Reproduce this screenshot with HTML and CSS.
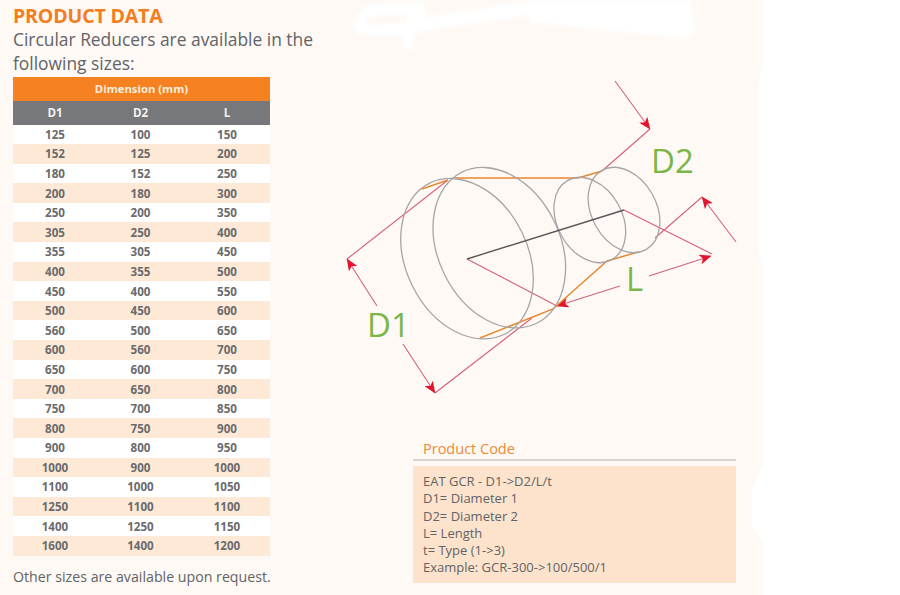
FILE: index.html
```html
<!DOCTYPE html>
<html lang="en">
<head>
<meta charset="utf-8">
<title>Circular Reducers - Product Data</title>
<link rel="stylesheet" href="styles.css">
</head>
<body>
<main class="page">
  <section class="data">
    <h1 class="title">PRODUCT DATA</h1>
    <p class="intro">Circular Reducers are available in the following sizes:</p>
    <div class="sizes">
      <div class="band">Dimension (mm)</div>
      <div class="row head"><span>D1</span><span>D2</span><span>L</span></div>
      <div class="row"><span>125</span><span>100</span><span>150</span></div>
      <div class="row"><span>152</span><span>125</span><span>200</span></div>
      <div class="row"><span>180</span><span>152</span><span>250</span></div>
      <div class="row"><span>200</span><span>180</span><span>300</span></div>
      <div class="row"><span>250</span><span>200</span><span>350</span></div>
      <div class="row"><span>305</span><span>250</span><span>400</span></div>
      <div class="row"><span>355</span><span>305</span><span>450</span></div>
      <div class="row"><span>400</span><span>355</span><span>500</span></div>
      <div class="row"><span>450</span><span>400</span><span>550</span></div>
      <div class="row"><span>500</span><span>450</span><span>600</span></div>
      <div class="row"><span>560</span><span>500</span><span>650</span></div>
      <div class="row"><span>600</span><span>560</span><span>700</span></div>
      <div class="row"><span>650</span><span>600</span><span>750</span></div>
      <div class="row"><span>700</span><span>650</span><span>800</span></div>
      <div class="row"><span>750</span><span>700</span><span>850</span></div>
      <div class="row"><span>800</span><span>750</span><span>900</span></div>
      <div class="row"><span>900</span><span>800</span><span>950</span></div>
      <div class="row"><span>1000</span><span>900</span><span>1000</span></div>
      <div class="row"><span>1100</span><span>1000</span><span>1050</span></div>
      <div class="row"><span>1250</span><span>1100</span><span>1100</span></div>
      <div class="row"><span>1400</span><span>1250</span><span>1150</span></div>
      <div class="row"><span>1600</span><span>1400</span><span>1200</span></div>
    </div>
    <p class="note">Other sizes are available upon request.</p>
  </section>
  <section class="side">
    <svg class="diagram" viewBox="340 0 423 430" width="423" height="430" aria-label="Reducer diagram">
      <defs>
        <marker id="head" viewBox="0 0 12 10" refX="11.5" refY="5" markerWidth="12" markerHeight="10" markerUnits="userSpaceOnUse" orient="auto">
          <path class="tip" d="M0 0 L12 5 L0 10 L3 5 Z"/>
        </marker>
        <filter id="soft" x="-5%" y="-20%" width="110%" height="140%"><feGaussianBlur stdDeviation="1.5"/></filter>
      </defs>
      <path class="smear" filter="url(#soft)" fill-rule="evenodd" d="M353 27 L358 12 L370 5 L423 3 L427 17 L527 2 L543 0 L690 0 L695 33 L687 38 L623 32 L583 27 L530 22 L530 15 L427 30 L415 33 L412 50 L404 48 L403 35 L360 35 Z M367 17 L407 14 L405 22 L367 25 Z"/>
      <g class="pink">
        <line x1="347" y1="259" x2="448" y2="180"/>
        <line x1="435" y1="393" x2="532" y2="318"/>
        <line x1="602" y1="171" x2="650" y2="129"/>
        <line x1="624" y1="210" x2="712" y2="254"/>
        <line x1="467" y1="259" x2="557" y2="306"/>
        <line x1="655" y1="238" x2="702" y2="197"/>
      </g>
      <g class="pink arrows">
        <line x1="615" y1="81" x2="650" y2="129"/>
        <line x1="736" y1="242" x2="702" y2="197"/>
        <line x1="377" y1="306" x2="347" y2="259"/>
        <line x1="403" y1="344" x2="435" y2="393"/>
        <line x1="620" y1="286" x2="557" y2="306"/>
        <line x1="649" y1="276" x2="711" y2="256"/>
      </g>
      <g class="orange">
        <polyline points="422,189 448,180"/>
        <polyline points="455,178 578,178 602,171"/>
        <polyline points="480,338 553,309 607,261 638,252"/>
      </g>
      <g class="rim">
        <ellipse cx="467" cy="258.7" rx="84.3" ry="61" transform="rotate(63.7 467 258.7)"/>
        <ellipse cx="499.3" cy="247.7" rx="84.3" ry="61" transform="rotate(63.7 499.3 247.7)"/>
        <ellipse cx="589.8" cy="220" rx="45.3" ry="32.4" transform="rotate(61 589.8 220)"/>
        <ellipse cx="624" cy="210" rx="45.3" ry="32.4" transform="rotate(61 624 210)"/>
      </g>
      <line class="axis" x1="467" y1="259" x2="624" y2="210"/>
      <text class="dim" x="651" y="173">D2</text>
      <text class="dim" x="367" y="337">D1</text>
      <text class="dim" x="626" y="291">L</text>
    </svg>
    <div class="code">
      <h2 class="code-title">Product Code</h2>
      <div class="code-body">
        <p>EAT GCR - D1-&gt;D2/L/t</p>
        <p>D1= Diameter 1</p>
        <p>D2= Diameter 2</p>
        <p>L= Length</p>
        <p>t= Type (1-&gt;3)</p>
        <p>Example: GCR-300-&gt;100/500/1</p>
      </div>
    </div>
  </section>
</main>
</body>
</html>
```
FILE: styles.css
```css
* { box-sizing: border-box; }
html, body { margin: 0; padding: 0; background: #fff; }
body { font-family: "Open Sans", "Noto Sans", sans-serif; color: #58595b; }
p, h1, h2 { margin: 0; }

.page {
  width: 763px;
  height: 595px;
  background: #fef9f5;
  display: flex;
  overflow: hidden;
  clip-path: polygon(0 0, 763px 0, 763px 60px, 758px 90px, 758px 250px, 763px 270px, 763px 465px, 752px 490px, 752px 525px, 763px 545px, 763px 595px, 0 595px);
}

.data { width: 340px; flex: none; padding: 4px 0 0 13px; }
.title { font-size: 19.6px; line-height: 24px; font-weight: 700; color: #f47d20; letter-spacing: -0.2px; }
.intro { width: 310px; margin-top: -1px; font-size: 17.4px; line-height: 24px; color: #626366; }

.sizes { width: 257px; margin-top: 2px; }
.band {
  height: 24px;
  background: #f68121;
  color: #fdeedd;
  font-size: 11.3px;
  font-weight: 700;
  line-height: 24px;
  text-align: center;
}
.row {
  display: grid;
  grid-template-columns: 84px 87px 86px;
  height: 19.6px;
  align-items: center;
  text-align: center;
  font-size: 11.6px;
  font-weight: 700;
  color: #6a6b6e;
  background: #fff;
}
.row:nth-child(even) { background: #fde9d5; }
.row.head { height: 23.5px; background: #77787b; color: #f2f2f2; }

.note { margin-top: 11px; font-size: 14.2px; line-height: 20px; color: #626366; }

.side { flex: 1; display: flex; flex-direction: column; }
.diagram { display: block; flex: none; }

.code { margin: 8px 27px 0 73px; }
.code-title { height: 23px; border-bottom: 2px solid #d4d3d2; font-size: 14.5px; line-height: 21px; font-weight: 400; color: #ee8a35; padding-left: 10px; }
.code-body {
  margin-top: 5px;
  background: #fde3cc;
  height: 117px;
  padding: 7px 10px 0;
  font-size: 13px;
  line-height: 17.3px;
  color: #626366;
}

.smear { fill: #fff; }
.pink line { stroke: #d4617f; stroke-width: 1.1; fill: none; }
.arrows line { marker-end: url(#head); }
.tip { fill: #e2132c; }
.orange polyline { stroke: #e8872e; stroke-width: 1.4; fill: none; }
.rim ellipse { stroke: #a5a5a8; stroke-width: 1.3; fill: none; }
.axis { stroke: #58585a; stroke-width: 1.4; }
.dim { font-size: 33px; fill: #7ab648; font-family: "Open Sans", sans-serif; }
```
